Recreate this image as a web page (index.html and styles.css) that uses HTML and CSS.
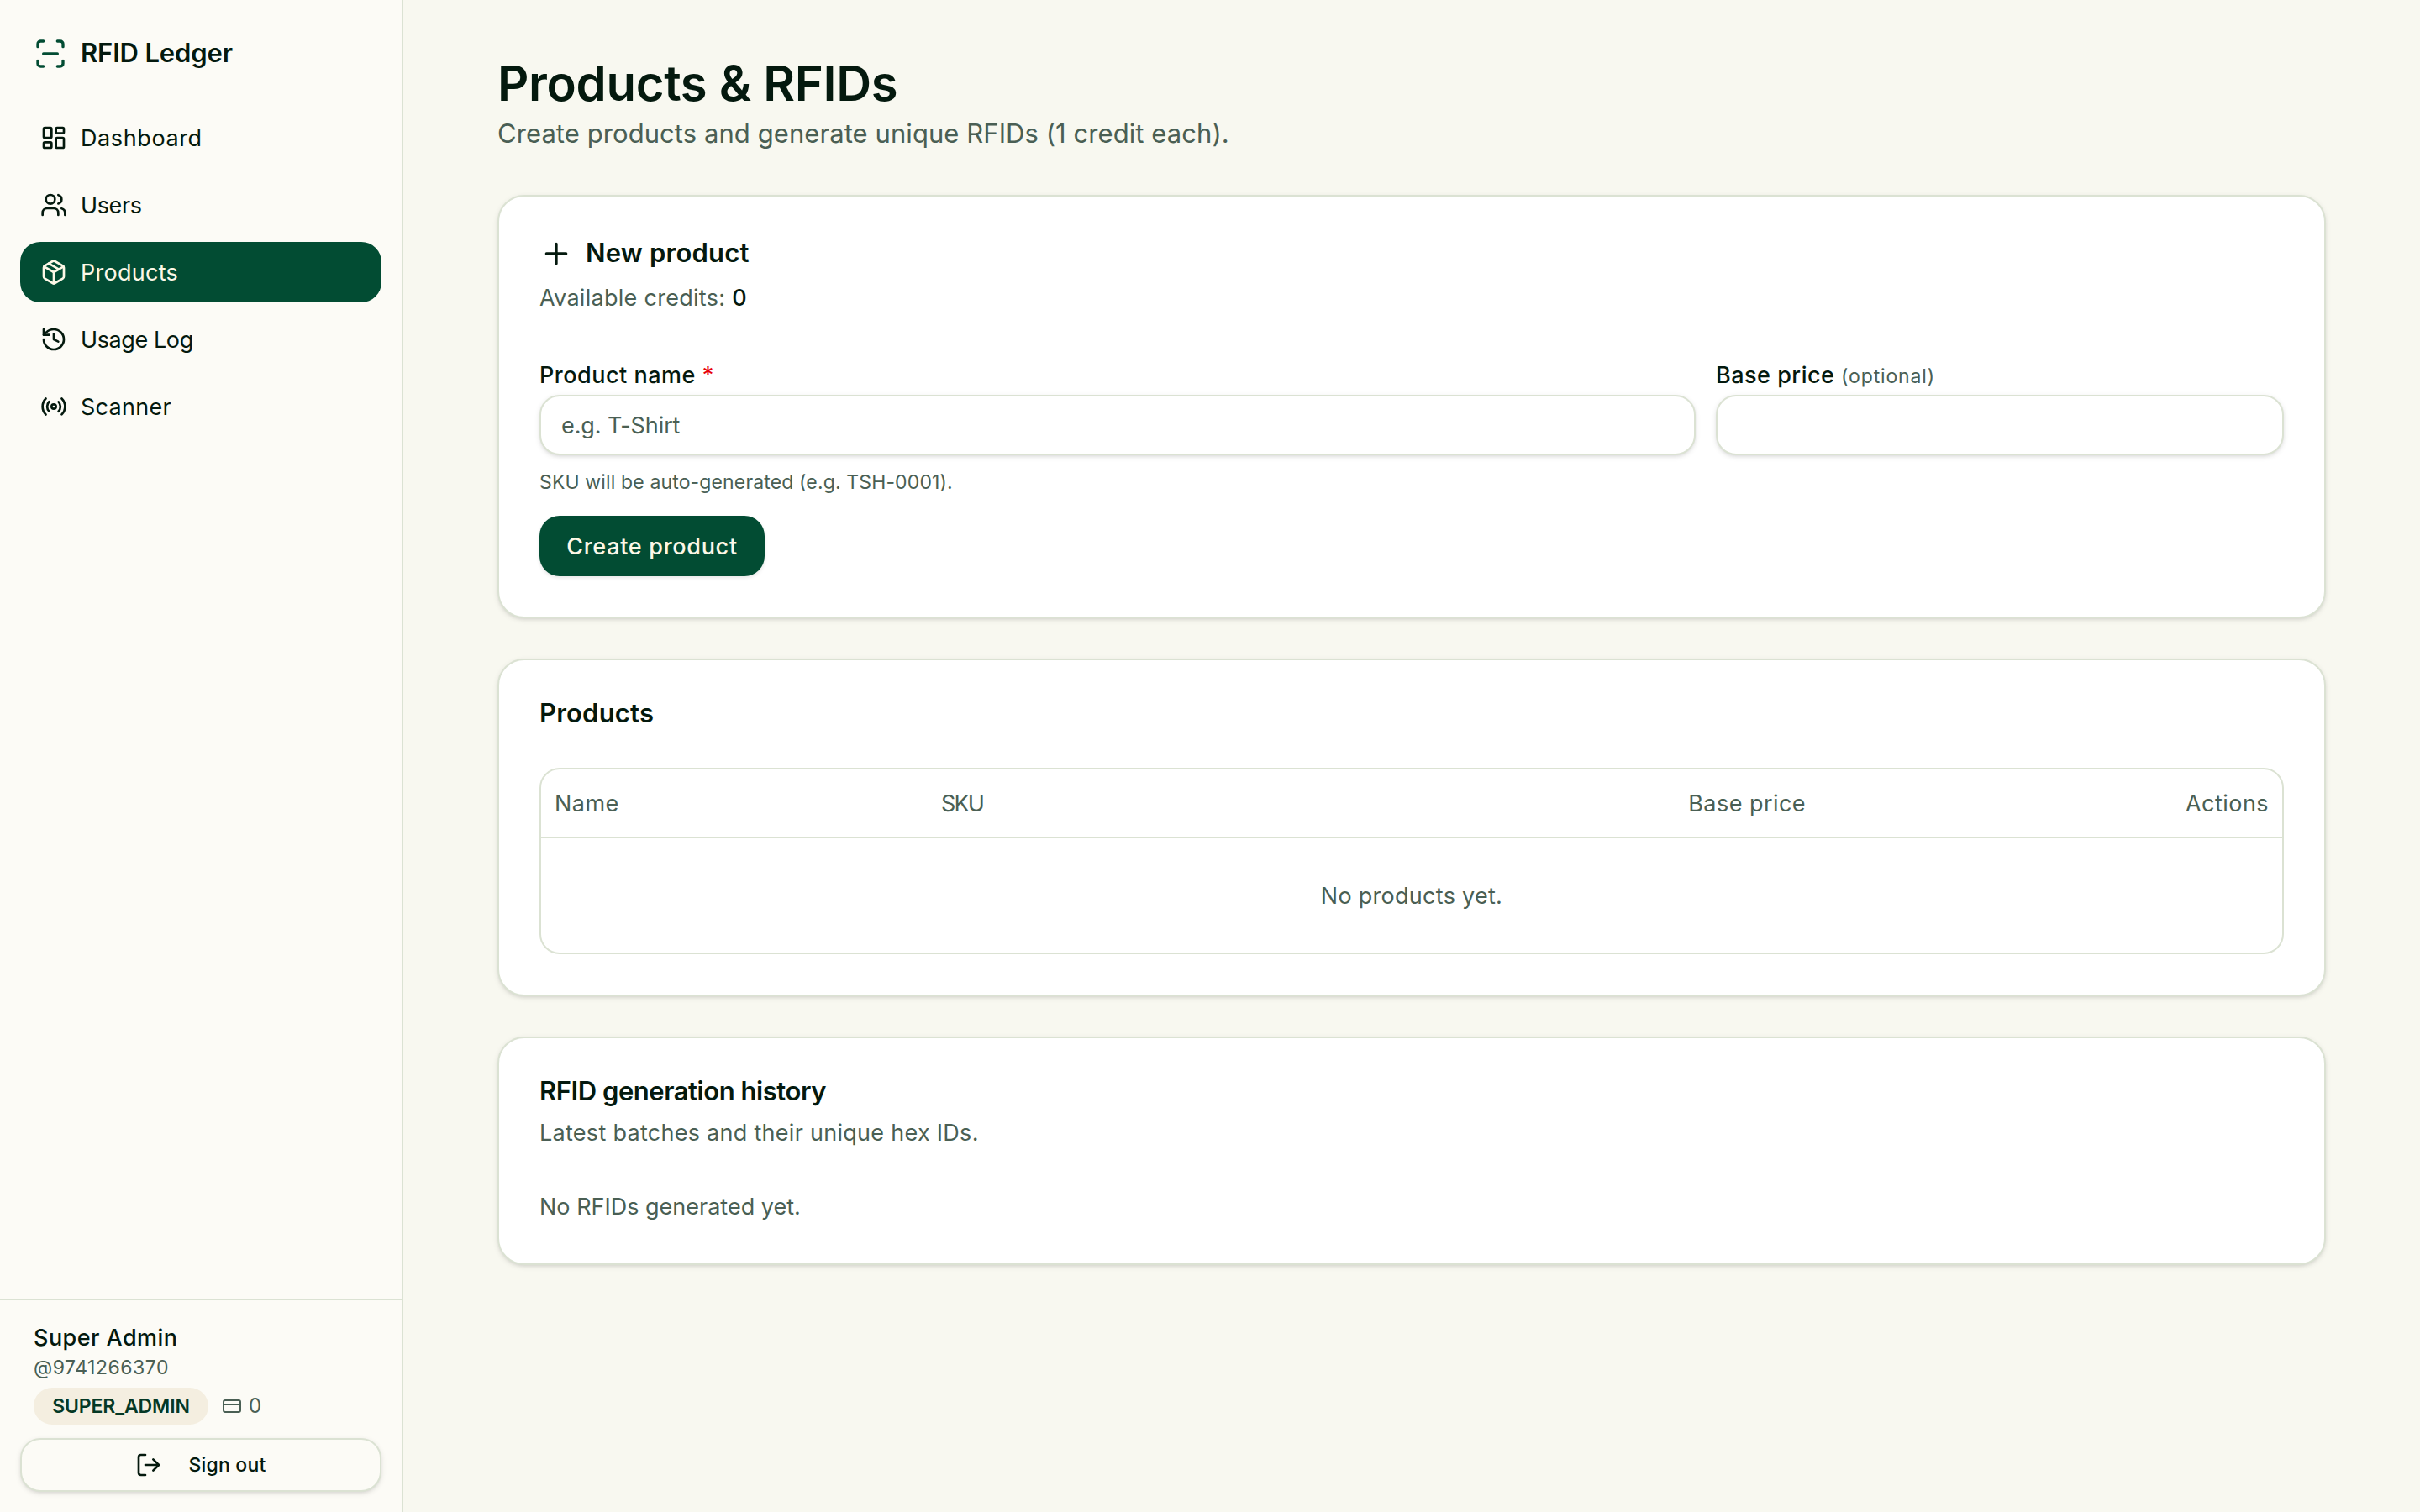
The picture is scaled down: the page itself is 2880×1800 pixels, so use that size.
FILE: index.html
```html
<!DOCTYPE html>
<html lang="en">
<head>
  <meta charset="UTF-8">
  <meta name="viewport" content="width=device-width, initial-scale=1.0">
  <title>RFID Ledger</title>
  <link rel="stylesheet" href="styles.css">
</head>
<body>
  <div class="app">
    <aside class="sidebar">
      <div class="brand">
        <svg class="icon icon-lg" viewBox="0 0 24 24"><path d="M3 7V5a2 2 0 0 1 2-2h2"/><path d="M17 3h2a2 2 0 0 1 2 2v2"/><path d="M21 17v2a2 2 0 0 1-2 2h-2"/><path d="M7 21H5a2 2 0 0 1-2-2v-2"/><path d="M7 12h10"/></svg>
        <span class="brand-name">RFID Ledger</span>
      </div>
      <nav class="nav">
        <a class="nav-item wide">
          <svg class="icon" viewBox="0 0 24 24"><rect width="7" height="9" x="3" y="3" rx="1"/><rect width="7" height="5" x="14" y="3" rx="1"/><rect width="7" height="9" x="14" y="12" rx="1"/><rect width="7" height="5" x="3" y="16" rx="1"/></svg>
          <span>Dashboard</span>
        </a>
        <a class="nav-item tight">
          <svg class="icon" viewBox="0 0 24 24"><path d="M16 21v-2a4 4 0 0 0-4-4H6a4 4 0 0 0-4 4v2"/><path d="M16 3.128a4 4 0 0 1 0 7.744"/><path d="M22 21v-2a4 4 0 0 0-3-3.87"/><circle cx="9" cy="7" r="4"/></svg>
          <span>Users</span>
        </a>
        <a class="nav-item active">
          <svg class="icon" viewBox="0 0 24 24"><path d="M11 21.73a2 2 0 0 0 2 0l7-4A2 2 0 0 0 21 16V8a2 2 0 0 0-1-1.73l-7-4a2 2 0 0 0-2 0l-7 4A2 2 0 0 0 3 8v8a2 2 0 0 0 1 1.73z"/><path d="M12 22V12"/><path d="M3.29 7 12 12l8.71-5"/><path d="m7.5 4.27 9 5.15"/></svg>
          <span>Products</span>
        </a>
        <a class="nav-item tight">
          <svg class="icon" viewBox="0 0 24 24"><path d="M3 12a9 9 0 1 0 9-9 9.75 9.75 0 0 0-6.74 2.74L3 8"/><path d="M3 3v5h5"/><path d="M12 7v5l4 2"/></svg>
          <span>Usage Log</span>
        </a>
        <a class="nav-item">
          <svg class="icon" viewBox="0 0 24 24"><path d="M4.9 19.1C1 15.2 1 8.8 4.9 4.9"/><path d="M7.8 16.2c-2.3-2.3-2.3-6.1 0-8.5"/><circle cx="12" cy="12" r="2"/><path d="M16.2 7.8c2.3 2.3 2.3 6.1 0 8.5"/><path d="M19.1 4.9C23 8.8 23 15.1 19.1 19"/></svg>
          <span>Scanner</span>
        </a>
      </nav>
      <div class="account">
        <div class="account-info">
          <div class="account-name">Super Admin</div>
          <div class="account-handle">@9741266370</div>
          <div class="account-meta">
            <span class="badge">SUPER_ADMIN</span>
            <span class="credits">
              <svg class="icon icon-sm" viewBox="0 0 24 24"><rect width="20" height="14" x="2" y="5" rx="2"/><path d="M2 10h20"/></svg>
              0
            </span>
          </div>
        </div>
        <button class="sign-out">
          <svg class="icon" viewBox="0 0 24 24"><path d="m16 17 5-5-5-5"/><path d="M21 12H9"/><path d="M9 21H5a2 2 0 0 1-2-2V5a2 2 0 0 1 2-2h4"/></svg>
          <span>Sign out</span>
        </button>
      </div>
    </aside>

    <main class="main">
      <header class="page-header">
        <h1>Products &amp; RFIDs</h1>
        <p>Create products and generate unique RFIDs (1 credit each).</p>
      </header>

      <section class="card">
        <h2 class="with-icon">
          <svg class="icon icon-lg" viewBox="0 0 24 24"><path d="M5 12h14"/><path d="M12 5v14"/></svg>
          <span>New product</span>
        </h2>
        <p class="description">Available credits: <strong>0</strong></p>
        <form class="product-form">
          <div class="fields">
            <div class="field">
              <label for="name">Product name <span class="required">*</span></label>
              <input type="text" id="name" name="name" placeholder="e.g. T-Shirt">
              <p class="hint">SKU will be auto-generated (e.g. TSH-0001).</p>
            </div>
            <div class="field">
              <label for="price">Base price <span class="optional">(optional)</span></label>
              <input type="text" id="price" name="price">
            </div>
          </div>
          <button type="submit" class="button">Create product</button>
        </form>
      </section>

      <section class="card">
        <h2>Products</h2>
        <div class="table-wrap">
          <table>
            <colgroup>
              <col class="col-name">
              <col>
              <col class="col-price">
              <col class="col-actions">
            </colgroup>
            <thead>
              <tr>
                <th>Name</th>
                <th class="sku">SKU</th>
                <th class="right">Base price</th>
                <th class="right">Actions</th>
              </tr>
            </thead>
            <tbody>
              <tr>
                <td colspan="4">No products yet.</td>
              </tr>
            </tbody>
          </table>
        </div>
      </section>

      <section class="card">
        <h2 class="history-title">RFID generation history</h2>
        <p class="description history-description">Latest batches and their unique hex IDs.</p>
        <p class="empty">No RFIDs generated yet.</p>
      </section>
    </main>
  </div>
</body>
</html>
```
FILE: styles.css
```css
* {
  box-sizing: border-box;
}

body {
  margin: 0;
  font-family: Inter, "Open Sans", sans-serif;
  font-size: 27px;
  line-height: 40px;
  letter-spacing: 0.28px;
  color: #04190e;
  background-color: #f8f8f0;
}

h1,
h2,
p {
  margin: 0;
}

.app {
  display: flex;
  min-height: 100vh;
}

.icon {
  width: 32px;
  height: 32px;
  flex-shrink: 0;
  fill: none;
  stroke: currentColor;
  stroke-width: 2;
  stroke-linecap: round;
  stroke-linejoin: round;
}

.icon-lg {
  width: 40px;
  height: 40px;
}

.icon-sm {
  width: 24px;
  height: 24px;
}

/* Sidebar */
.sidebar {
  display: flex;
  flex-direction: column;
  width: 480px;
  height: 100vh;
  flex-shrink: 0;
  background-color: #fcfbf6;
  border-right: 2px solid #dbe2d3;
}

.brand {
  display: flex;
  align-items: flex-start;
  gap: 16px;
  height: 128px;
  padding: 44px 40px 0;
}

.brand .icon {
  color: #024c33;
}

.brand-name {
  font-size: 31px;
  font-weight: 560;
  line-height: 38px;
  letter-spacing: -0.15px;
}

.nav {
  display: flex;
  flex-direction: column;
  flex: 1;
  gap: 8px;
  padding: 0 24px;
}

.nav-item {
  display: flex;
  align-items: center;
  gap: 16px;
  height: 72px;
  padding: 0 24px;
  border-radius: 24px;
}

.nav-item span {
  padding-top: 2px;
}

.nav-item.active {
  color: #fdf8e7;
  background-color: #024c33;
}

.nav-item.wide {
  letter-spacing: 0.6px;
}

.nav-item.tight {
  letter-spacing: -0.4px;
}

.account {
  padding: 24px;
  border-top: 2px solid #dbe2d3;
}

.account-info {
  padding: 1px 16px 0;
}

.account-name {
  font-weight: 460;
  letter-spacing: 0.45px;
}

.account-handle {
  margin-top: -1px;
  font-size: 23px;
  line-height: 32px;
  letter-spacing: 0.5px;
  color: #4a5f54;
}

.account-meta {
  display: flex;
  align-items: center;
  gap: 16px;
  margin-top: 8px;
}

.badge {
  display: flex;
  align-items: center;
  justify-content: center;
  width: 208px;
  height: 44px;
  border-radius: 22px;
  font-size: 23px;
  font-weight: 580;
  letter-spacing: -0.1px;
  color: #043825;
  background-color: #f4eee0;
}

.credits {
  display: flex;
  align-items: center;
  gap: 8px;
  font-size: 24px;
  color: #4a5f54;
}

.sign-out {
  display: flex;
  align-items: center;
  justify-content: center;
  gap: 31px;
  width: 100%;
  height: 64px;
  margin-top: 16px;
  border: 2px solid #dbe2d3;
  border-radius: 24px;
  font: inherit;
  font-size: 23px;
  font-weight: 460;
  letter-spacing: 0.2px;
  color: inherit;
  background-color: #fcfbf6;
  box-shadow: 0 2px 6px rgba(0, 0, 0, 0.1), 0 2px 4px -2px rgba(0, 0, 0, 0.1);
}

/* Page */
.main {
  display: flex;
  flex-direction: column;
  gap: 48px;
  width: 2304px;
  margin: 0 auto;
  padding: 64px;
}

.page-header h1 {
  font-size: 58px;
  font-weight: 560;
  line-height: 70px;
  letter-spacing: -0.3px;
}

.page-header p {
  font-size: 31px;
  line-height: 50px;
  letter-spacing: 0.07px;
  color: #4a5f54;
}

.card {
  padding: 48px;
  border: 2px solid #dbe2d3;
  border-radius: 32px;
  background-color: #fff;
  box-shadow: 0 2px 6px rgba(0, 0, 0, 0.1), 0 2px 4px -2px rgba(0, 0, 0, 0.1);
}

.card h2 {
  font-size: 31px;
  font-weight: 560;
  line-height: 30px;
  letter-spacing: 0.2px;
}

.card h2.with-icon {
  display: flex;
  gap: 15px;
  height: 40px;
  line-height: 38px;
}

.description {
  margin-top: 13px;
  color: #4a5f54;
}

.description strong {
  font-weight: 460;
  color: #04190e;
}

.product-form {
  margin-top: 58px;
}

.fields {
  display: grid;
  grid-template-columns: 1376px 1fr;
  gap: 24px;
}

.field label {
  display: block;
  height: 28px;
  line-height: 28px;
  margin-bottom: 9px;
  font-weight: 460;
  letter-spacing: 0.5px;
}

.required {
  color: #e7000b;
}

.optional {
  font-size: 23px;
  font-weight: 400;
  letter-spacing: 0.85px;
  color: #4a5f54;
}

.field input {
  display: block;
  width: 100%;
  height: 72px;
  padding: 0 24px;
  border: 2px solid #dbe2d3;
  border-radius: 24px;
  font: inherit;
  letter-spacing: -0.1px;
  background-color: #fff;
  box-shadow: 0 2px 6px rgba(0, 0, 0, 0.1), 0 2px 4px -2px rgba(0, 0, 0, 0.1);
}

.field input::placeholder {
  color: #4a5f54;
}

.hint {
  margin-top: 16px;
  font-size: 23px;
  line-height: 32px;
  letter-spacing: 0.14px;
  color: #4a5f54;
}

.button {
  display: block;
  width: 268px;
  height: 72px;
  margin-top: 24px;
  padding: 2px 0 0;
  border: none;
  border-radius: 24px;
  font: inherit;
  font-weight: 460;
  letter-spacing: 0.7px;
  color: #fdf8e7;
  background-color: #024c33;
  box-shadow: 0 2px 4px rgba(0, 0, 0, 0.1);
}

/* Products table */
.table-wrap {
  margin-top: 50px;
  border: 2px solid #dbe2d3;
  border-radius: 24px;
  overflow: hidden;
}

table {
  width: 100%;
  table-layout: fixed;
  border-collapse: separate;
  border-spacing: 0;
}

.col-name {
  width: 460px;
}

.col-price {
  width: 180px;
}

.col-actions {
  width: 551px;
}

th {
  height: 82px;
  padding: 2px 16px 0;
  border-bottom: 2px solid #dbe2d3;
  font-weight: 440;
  letter-spacing: 0.45px;
  text-align: left;
  color: #4a5f54;
}

th.sku {
  letter-spacing: -1.8px;
}

th.right {
  text-align: right;
}

td {
  height: 136px;
  padding: 2px 16px 0;
  text-align: center;
  color: #4a5f54;
}

/* Generation history */
.card h2.history-title {
  letter-spacing: -0.45px;
}

.history-description {
  margin-top: 15px;
}

.empty {
  margin-top: 48px;
  margin-bottom: -1px;
  letter-spacing: 0;
  color: #4a5f54;
}
```
